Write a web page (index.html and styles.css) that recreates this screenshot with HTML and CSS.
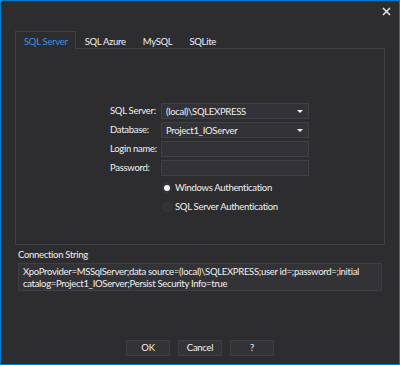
FILE: index.html
```html
<!DOCTYPE html>
<html>
<head>
<meta charset="utf-8">
<link rel="stylesheet" href="styles.css">
</head>
<body>
<div class="window">
  <div class="titlebar">
    <button class="close" aria-label="Close">
      <svg width="9" height="9" viewBox="0 0 9 9"><path d="M1 1L8 8M8 1L1 8" stroke="#e6e6e6" stroke-width="1.5"/></svg>
    </button>
  </div>
  <div class="tabs">
    <div class="tab active">SQL Server</div>
    <div class="tab">SQL Azure</div>
    <div class="tab">MySQL</div>
    <div class="tab">SQLite</div>
  </div>
  <div class="panel">
    <div class="form">
      <label class="lbl">SQL Server:</label>
      <div class="field combo"><span>(local)\SQLEXPRESS</span><i class="arrow"></i></div>
      <label class="lbl">Database:</label>
      <div class="field combo"><span>Project1_IOServer</span><i class="arrow"></i></div>
      <label class="lbl">Login name:</label>
      <div class="field"></div>
      <label class="lbl">Password:</label>
      <div class="field"></div>
    </div>
    <div class="radios">
      <div class="radio checked"><span class="dot"></span>Windows Authentication</div>
      <div class="radio"><span class="dot"></span>SQL Server Authentication</div>
    </div>
  </div>
  <div class="conn-label">Connection String</div>
  <div class="conn-box">XpoProvider=MSSqlServer;data source=(local)\SQLEXPRESS;user id=;password=;initial catalog=Project1_IOServer;Persist Security Info=true</div>
  <div class="buttons">
    <button class="btn">OK</button>
    <button class="btn">Cancel</button>
    <button class="btn">?</button>
  </div>
</div>
</body>
</html>
```
FILE: styles.css
```css
html, body {
  margin: 0;
  padding: 0;
  background: #2d2d30;
}
.window {
  width: 400px;
  height: 365px;
  box-sizing: border-box;
  border: 1px solid #007acc;
  background: #2d2d30;
  display: flex;
  flex-direction: column;
  font-family: Lato, "Noto Sans", sans-serif;
  font-size: 9.5px;
  letter-spacing: -0.3px;
  color: #f1f1f1;
}
.titlebar {
  height: 30px;
  display: flex;
  justify-content: flex-end;
  align-items: flex-start;
}
.close {
  margin: 5px 7px 0 0;
  width: 11px;
  height: 11px;
  padding: 1px;
  border: 0;
  background: transparent;
  display: flex;
  align-items: center;
  justify-content: center;
}
.tabs {
  display: flex;
  height: 17px;
  margin-left: 14px;
}
.tab {
  box-sizing: border-box;
  height: 17px;
  padding: 0 7px 0 8px;
  line-height: 19px;
  border: 1px solid transparent;
  border-bottom: 0;
  color: #f1f1f1;
  white-space: nowrap;
}
.tab.active {
  color: #3794e8;
  border-color: #3f3f46;
  background: #2d2d30;
  position: relative;
  z-index: 1;
  height: 18px;
  margin-bottom: -1px;
}
.panel {
  box-sizing: border-box;
  height: 197px;
  margin: 0 14px;
  border: 1px solid #3f3f46;
  padding: 54px 0 0 94px;
}
.form {
  display: grid;
  grid-template-columns: 51px 148px;
  grid-auto-rows: 16px;
  row-gap: 3px;
  align-items: center;
}
.lbl {
  line-height: 16px;
  white-space: nowrap;
}
.field {
  box-sizing: border-box;
  height: 16px;
  background: #333337;
  border: 1px solid #3f3f46;
  display: flex;
  align-items: center;
  padding: 0 4px;
}
.combo span {
  flex: 1;
}
.arrow {
  width: 0;
  height: 0;
  border-left: 3px solid transparent;
  border-right: 3px solid transparent;
  border-top: 3px solid #f1f1f1;
  margin-right: 1px;
}
.radios {
  margin: 6px 0 0 52px;
  display: flex;
  flex-direction: column;
  row-gap: 8px;
}
.radio {
  display: flex;
  align-items: center;
  height: 11px;
  gap: 3px;
  white-space: nowrap;
}
.dot {
  box-sizing: border-box;
  width: 10px;
  height: 10px;
  border-radius: 50%;
  background: #333337;
  border: 1px solid #38383c;
  display: flex;
  align-items: center;
  justify-content: center;
}
.radio.checked .dot::after {
  content: "";
  width: 6px;
  height: 6px;
  border-radius: 50%;
  background: #f4f4f4;
}
.conn-label {
  height: 18px;
  line-height: 20px;
  margin-left: 17px;
}
.conn-box {
  box-sizing: border-box;
  height: 28px;
  margin: 0 17px;
  background: #333337;
  border: 1px solid #3f3f46;
  padding: 2px 4px 0 4px;
  line-height: 11.5px;
}
.buttons {
  margin-top: 49px;
  display: flex;
  justify-content: center;
  gap: 8px;
}
.btn {
  box-sizing: border-box;
  width: 44px;
  height: 16px;
  padding: 0;
  background: #333337;
  border: 1px solid #3f3f46;
  color: #f1f1f1;
  font-family: inherit;
  font-size: 9.5px;
  letter-spacing: inherit;
  line-height: 14px;
}
```
